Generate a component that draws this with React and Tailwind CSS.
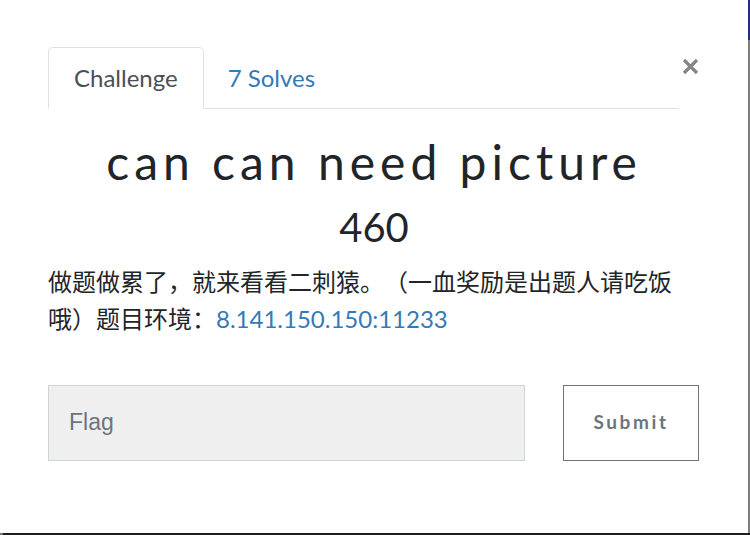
export default function App() {
  return (
    <div className="w-[750px] h-[535px] bg-[#1e1e1e] flex flex-col overflow-hidden">
      <div className="flex">
        <div className="w-[748px] h-[533px] bg-white relative pt-[47px] px-[48px]" style={{ fontFamily: "Lato, 'Noto Sans CJK SC', sans-serif" }}>
          {/* close */}
          <button className="absolute left-[681px] top-[57px] w-[18px] h-[18px] flex items-center justify-center" aria-label="Close">
            <svg width="17" height="17" viewBox="0 0 17 17">
              <path d="M2 2 L15 15 M15 2 L2 15" stroke="#858585" strokeWidth="3.2" />
            </svg>
          </button>

          {/* tabs */}
          <div className="flex w-[631px] border-b border-[#dee2e6]">
            <div className="h-[62px] px-[25px] -mb-px flex items-center border border-[#dee2e6] border-b-white rounded-t-[5px] text-[24px] text-[#495057]">
              Challenge
            </div>
            <div className="h-[62px] px-[24px] -mb-px flex items-center text-[24px] text-[#337ab7]">
              7 Solves
            </div>
          </div>

          <h2 className="mt-[24px] text-center text-[48px] leading-[1.2] text-[#212529] tracking-[5px]">
            can can need picture
          </h2>
          <h3 className="mt-[12px] text-center text-[40px] leading-[1.2] text-[#212529]">460</h3>

          <p className="mt-[12px] w-[640px] text-[24px] leading-[37px] text-[#212529] [text-spacing-trim:space-all]">
            做题做累了，就来看看二刺猿。（一血奖励是出题人请吃饭哦）题目环境：
            <a className="text-[#337ab7]">8.141.150.150:11233</a>
          </p>

          <div className="mt-[48px] flex gap-[38px]">
            <input
              placeholder="Flag"
              className="w-[477px] h-[76px] bg-[#efefef] border border-[#ced4da] px-[20px] text-[23px] placeholder:text-[#6c757d] outline-none"
              style={{ fontFamily: "'Liberation Sans', Arial, sans-serif" }}
            />
            <button className="w-[136px] h-[76px] border border-[#6c757d] text-[#6c757d] font-bold text-[19px] tracking-[2.6px]">
              Submit
            </button>
          </div>
        </div>
        <div className="w-[2px] flex flex-col">
          <div className="h-[40px] bg-[#2b2a80]" />
          <div className="flex-1 bg-[#7d7d7d]" />
        </div>
      </div>
      <div className="flex-1 flex">
        <div className="w-[3px] bg-[#777]" />
      </div>
    </div>
  );
}
